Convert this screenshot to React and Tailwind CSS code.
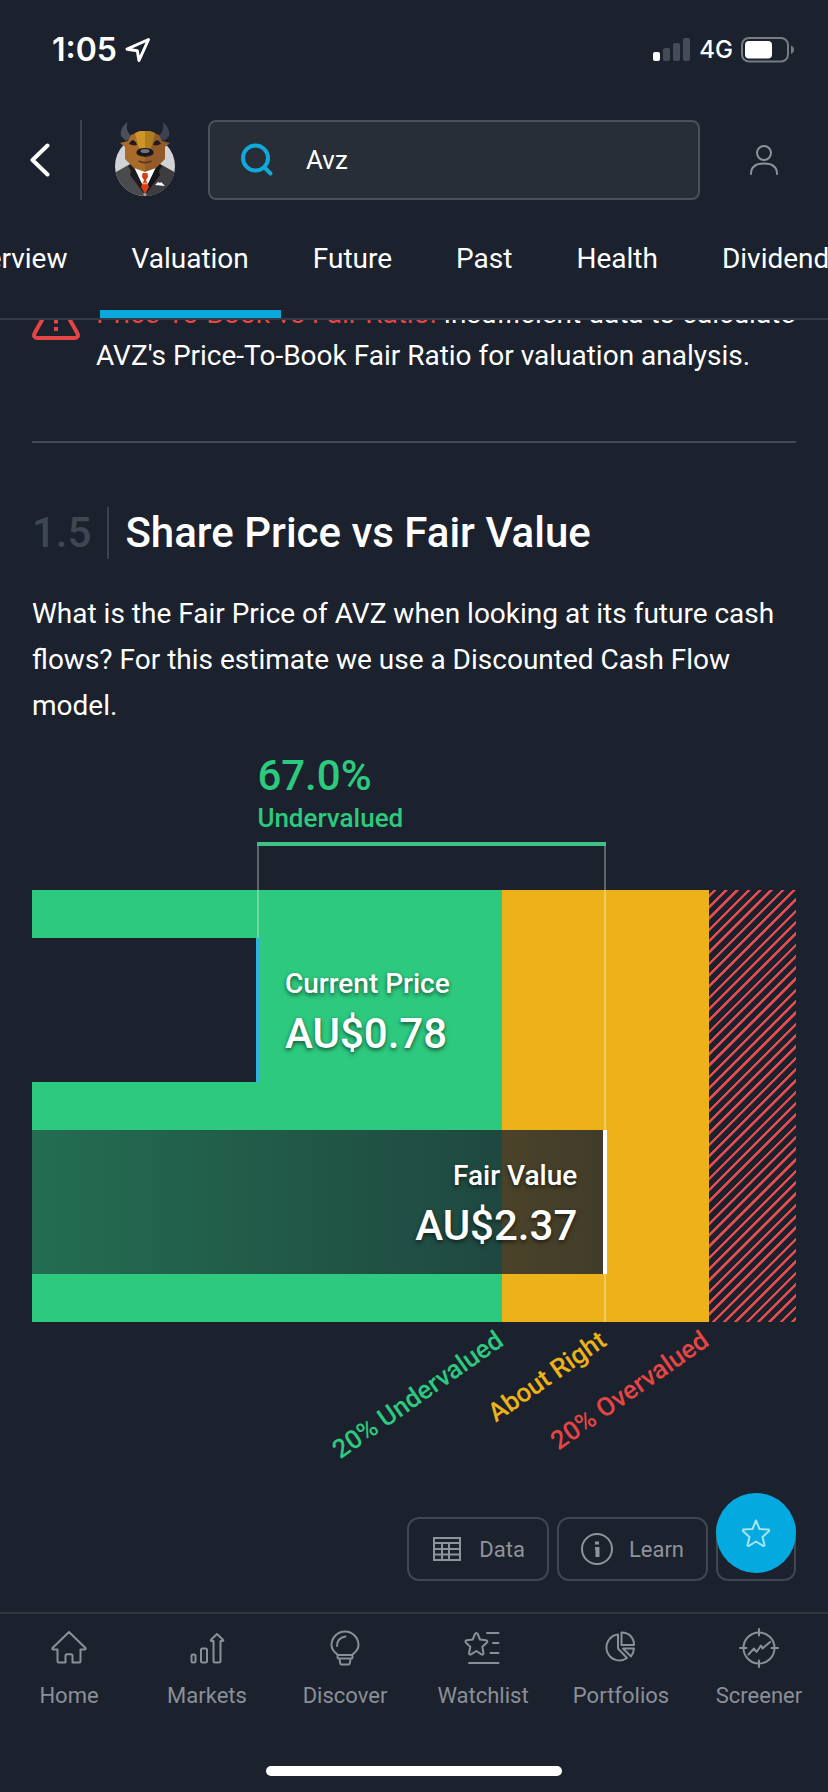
import React, { useState } from 'react';

const TABS = ['Overview', 'Valuation', 'Future', 'Past', 'Health', 'Dividend'];

const LocationIcon = () => (
    <svg width="26" height="26" viewBox="0 0 26 26" fill="none" stroke="white" strokeWidth="3" strokeLinejoin="round" aria-hidden="true">
        <path d="M23.5 2.5 2 12.2l10.3 1.5L14 23.5Z" />
    </svg>
);

const SignalIcon = () => (
    <svg width="38" height="24" viewBox="0 0 38 24" aria-hidden="true">
        <rect x="0" y="14" width="7" height="9" rx="2" fill="white" />
        <rect x="10" y="10" width="7" height="13" rx="2" fill="#464c57" />
        <rect x="20" y="5" width="7" height="18" rx="2" fill="#464c57" />
        <rect x="30" y="0" width="7" height="23" rx="2" fill="#464c57" />
    </svg>
);

const BatteryIcon = () => (
    <svg width="54" height="26" viewBox="0 0 54 26" fill="none" aria-hidden="true">
        <rect x="1" y="1" width="46" height="23.5" rx="7" stroke="#777b83" strokeWidth="2" />
        <rect x="4" y="4" width="27" height="17.5" rx="4" fill="white" />
        <path d="M50 8.5c2 .8 3 2.300 3 4.200s-1 3.400-3 4.200Z" fill="#777b83" />
    </svg>
);

const BackIcon = () => (
    <svg width="20" height="34" viewBox="0 0 20 34" fill="none" stroke="white" strokeWidth="4" strokeLinecap="round" strokeLinejoin="round" aria-hidden="true">
        <path d="M17.500 2.500 2.500 17l15 14.500" />
    </svg>
);

const SearchIcon = () => (
    <svg width="34" height="34" viewBox="0 0 34 34" fill="none" stroke="#10a9da" strokeWidth="4" strokeLinecap="round" aria-hidden="true">
        <circle cx="15.500" cy="15" r="12.500" />
        <path d="m24.500 24.500 6 6" />
    </svg>
);

const UserIcon = () => (
    <svg width="30" height="30" viewBox="0 0 30 30" fill="none" stroke="#8d929c" strokeWidth="2" strokeLinecap="round" aria-hidden="true">
        <circle cx="15" cy="8" r="7" />
        <path d="M2 29c0-6.500 4.500-10.500 13-10.500S28 22.500 28 29" />
    </svg>
);

const BullAvatar = () => (
    <svg width="62" height="78" viewBox="0 0 62 78" role="img" aria-label="Bull in a suit">
        <defs>
            <clipPath id="avatar-circle">
                <circle cx="31" cy="45" r="30" />
            </clipPath>
        </defs>
        <circle cx="31" cy="45" r="30" fill="#d2d3d6" />
        <g clipPath="url(#avatar-circle)">
            <path d="M0 52 18 42l13 34 13-34 18 10v26H0Z" fill="#4b4b4d" />
            <path d="M31 76 44 42l18 10v26H31Z" fill="#3d3d3f" />
            <path d="M18 43 31 47l13-4-6 20-7 9-7-9Z" fill="#fff" />
            <path d="M18 42 14 45l3 5-1 4 15 20V69Z" fill="#1c1d21" />
            <path d="M44 42 48 45l-3 5 1 4-15 20V69Z" fill="#141519" />
            <path d="m28.500 52 5 0 .5 4-2 3 3 7-4 7-4-7 3-7-2-3Z" fill="#d83f14" />
            <path d="m28.500 62.500 5.500 0" stroke="#f3a382" strokeWidth="1.500" />
            <path d="m41 64 3-3 2 1 1-1 4 4Z" fill="#fff" />
            <circle cx="31" cy="73.500" r="1.500" fill="#a4a5a8" />
        </g>
        <path d="M13.500 1C8 5 6 10 7 15l5 5 7-4c-5-3-7.500-8-5.500-15Z" fill="#4b4f5b" />
        <path d="M48.500 1C54 5 56 10 55 15l-5 5-7-4c5-3 7.500-8 5.500-15Z" fill="#3e424e" />
        <path d="M31 10h-5l-9 4-3 6-8 2 5 4v12l9 9 11 4Z" fill="#a96b2c" />
        <path d="M31 10h5l9 4 3 6 8 2-5 4v12l-9 9-11 4Z" fill="#935b29" />
        <path d="M31 10h-5l-5 2 3 12 2 5h5Z" fill="#cd9528" />
        <path d="M31 10h5l5 2-3 12-2 5h-5Z" fill="#b07e1f" />
        <path d="M15 23c2-5 6-5 8 1-3 1-5 0-8-1ZM47 23c-2-5-6-5-8 1 3 1 5 0 8-1Z" fill="#221b1b" />
        <path d="M22.500 31c1-3.500 5-4 8.500-4s7.500.5 8.500 4c.5 3-3 4-8.500 5-5.500-1-9-2-8.500-5Z" fill="#19191d" />
        <ellipse cx="31" cy="30" rx="4.500" ry="2" fill="#70747b" />
        <path d="M24.500 40c4 2 9 2 13 0" fill="none" stroke="#5a3519" strokeWidth="1.500" />
    </svg>
);

const WarningIcon = () => (
    <svg width="48" height="46" viewBox="0 0 48 46" fill="none" stroke="#e64545" strokeWidth="4" strokeLinejoin="round" aria-hidden="true">
        <path d="M21 4.500 3 36.500c-2 4-.5 5.500 3 5.500h36c3.500 0 5-1.500 3-5.500L27 4.500c-1.500-2.500-4.500-2.500-6 0Z" />
        <path d="M24 14v13.500M24 31v4" />
    </svg>
);

const TableIcon = () => (
    <svg width="28" height="24" viewBox="0 0 28 24" fill="none" stroke="#8f939c" strokeWidth="2" aria-hidden="true">
        <path d="M1 1h26v22H1ZM1 6h26M1 12h26M1 17.500h26M9 6v17M16 6v17" />
    </svg>
);

const InfoIcon = () => (
    <svg width="32" height="32" viewBox="0 0 32 32" fill="none" stroke="#8f939c" aria-hidden="true">
        <circle cx="16" cy="16" r="15" strokeWidth="2" />
        <path d="M14 10h4M14 15.500h2.500" strokeWidth="3" />
        <path d="M16.500 14v10" strokeWidth="4" />
    </svg>
);

const StarIcon = () => (
    <svg width="28" height="28" viewBox="0 0 28 28" fill="none" stroke="#a5e4f6" strokeWidth="2" strokeLinejoin="round" aria-hidden="true">
        <path d="M14 1.500 17.500 10l9 .5c1 .2 1 1 .5 1.500l-6.500 6 2 8c0 1-.8 1.200-1.500.8L14 22.500l-7 4.300c-.8.400-1.600 0-1.500-.8l2-8L1 12c-.5-.6-.3-1.300.5-1.500l9-.5Z" />
    </svg>
);

const HomeIcon = () => (
    <path d="M20 4 3.500 20c-.5.800 0 1.500.8 1.500H8.500V33c0 1 .5 1.500 1.500 1.500h6.500V28c0-1.200.5-1.800 1.500-1.800h4c1 0 1.500.6 1.500 1.800v6.500H30c1 0 1.500-.5 1.500-1.500V21.500h4.200c.8 0 1.300-.7.8-1.500Z" />
);

const MarketsIcon = () => (
    <>
        <rect x="4.500" y="26.500" width="4" height="8" rx="1.500" />
        <rect x="14" y="20.500" width="6" height="14" rx="1.500" />
        <path d="M26.500 33V13h-2c-.8 0-1-.7-.5-1.200L30 6l6 5.800c.5.500.3 1.200-.5 1.200h-2v20c0 1-.5 1.500-1.500 1.500h-4c-1 0-1.500-.5-1.500-1.500Z" />
    </>
);

const DiscoverIcon = () => (
    <>
        <path d="M12.500 29v-2.500C9 24 6.500 21.500 6.500 17a13.500 13.500 0 0 1 27 0c0 4.500-2.500 7-6 9.500V29c0 1-.5 1.500-1.500 1.500H14c-1 0-1.500-.5-1.500-1.500ZM12.500 27h15M14.500 30.500l.5 4c.2 1.300.5 2 1.500 2h7c1 0 1.300-.7 1.500-2l.5-4" />
        <path d="M12 18c0-5 2.500-8.500 8.500-9.500" />
    </>
);

const WatchlistIcon = () => (
    <>
        <path d="M12 6c.8-1.500 2-1.500 2.700 0l2.300 5.500 6 .8c1.500.3 1.700 1.500.7 2.500l-4.400 4 1.200 6.200c.2 1.500-.8 2-2 1.300L13.300 23l-5.200 3.300c-1.200.7-2.200 0-2-1.300l1.200-6.200-4.300-4c-1-1-.7-2.200.7-2.500l6-.8Z" />
        <path d="M24 5h11.500M30 15h5.500M27.500 25h8M6 35h29.500" />
    </>
);

const PortfoliosIcon = () => (
    <>
        <path d="M17 6.500A13 13 0 1 0 26 30L17 20.500Z" />
        <path d="M20.500 4.500V17H33C33 9.500 28 4.500 20.500 4.500Z" />
        <path d="M22 20.500h11c-.2 3.500-1.200 5.500-3 8Z" />
    </>
);

const ScreenerIcon = () => (
    <>
        <circle cx="20" cy="20" r="15.500" />
        <path d="M20 1v6.500M20 32.500V39M1 20h6.500M32.500 20H39" />
        <path d="m9.500 26.500 5.500-6 2.500 3.500 4.500-6.500 1.500 3L31 14" />
    </>
);

const NAV_ITEMS = [
    { label: 'Home', Icon: HomeIcon },
    { label: 'Markets', Icon: MarketsIcon },
    { label: 'Discover', Icon: DiscoverIcon },
    { label: 'Watchlist', Icon: WatchlistIcon },
    { label: 'Portfolios', Icon: PortfoliosIcon },
    { label: 'Screener', Icon: ScreenerIcon },
];

const StatusBar = () => (
    <div className="flex h-[100px] items-center justify-between pl-[52px] pr-[33px]">
        <div className="flex items-center gap-2 font-['Inter',sans-serif] text-[32px] font-semibold">
            1:05
            <LocationIcon />
        </div>
        <div className="flex items-center gap-2 font-['Inter',sans-serif] text-2xl font-medium">
            <SignalIcon />
            4G
            <BatteryIcon />
        </div>
    </div>
);

const TopBar = () => {
    const [query, setQuery] = useState('Avz');
    return (
        <div className="mt-5 flex h-20 items-center">
            <button type="button" aria-label="Back" className="flex h-20 w-20 items-center justify-center">
                <BackIcon />
            </button>
            <div className="h-20 border-l-2 border-[#3c424d]" />
            <div className="flex w-[126px] justify-center">
                <BullAvatar />
            </div>
            <label className="flex h-20 flex-1 items-center gap-8 rounded-lg border-2 border-[#4b515c] bg-[#272e38] pl-[30px]">
                <SearchIcon />
                <input
                    type="text"
                    aria-label="Search"
                    value={query}
                    onChange={(e) => setQuery(e.target.value)}
                    className="min-w-0 flex-1 bg-transparent text-[26px] text-white outline-none"
                />
            </label>
            <button type="button" aria-label="Account" className="flex h-20 w-32 items-center justify-center">
                <UserIcon />
            </button>
        </div>
    );
};

const Tabs = () => {
    const [active, setActive] = useState('Valuation');
    return (
        <nav className="flex h-[120px] overflow-hidden border-b-2 border-[#343a45]">
            <div className="-ml-[78px] flex">
                {TABS.map(tab => (
                    <button
                        key={tab}
                        type="button"
                        onClick={() => setActive(tab)}
                        className={tab === active
                            ? 'border-b-8 border-[#0aa8dc] px-8 pt-2 text-[28px]'
                            : 'border-b-8 border-transparent px-8 pt-2 text-[28px]'}
                    >
                        {tab}
                    </button>
                ))}
            </div>
        </nav>
    );
};

const FairValueChart = () => (
    <div>
        <div className="ml-[29.5%] pb-[6px] font-medium text-[#2dc97e]">
            <div className="text-[42px] leading-[48px]">67.0%</div>
            <div className="text-[26px] leading-[36px]">Undervalued</div>
        </div>

        <div className="relative mt-12 flex h-[432px]">
            <div className="w-[61.5%] bg-[#2dc97e]" />
            <div className="w-[27.1%] bg-[#edb21a]" />
            <div className="flex-1 bg-[repeating-linear-gradient(135deg,transparent_0px,transparent_3px,#e64c50_3px,#e64c50_5px,transparent_6px,transparent_8px)]" />

            {/* bracket from current price to fair value */}
            <div className="absolute -top-12 left-[29.5%] h-24 border-l-2 border-white/30" />
            <div className="absolute -top-12 bottom-0 left-[74.9%] border-l-2 border-white/30" />
            <div className="absolute -top-12 left-[29.5%] h-1 w-[45.6%] bg-[#3cc283]" />

            <div className="absolute inset-0 flex flex-col gap-12 py-12 font-medium [text-shadow:0_2px_4px_rgba(0,0,0,0.6)]">
                <div className="flex h-36">
                    <div className="w-[29.7%] border-r-[3px] border-[#2fb4e0] bg-[#1b222d]" />
                    <div className="flex flex-col justify-center pl-[26px]">
                        <div className="text-[28px] leading-[48px]">Current Price</div>
                        <div className="text-[42px] leading-[52px]">AU$0.78</div>
                    </div>
                </div>
                <div className="flex h-36 w-[75.3%] flex-col justify-center border-r-4 border-white bg-linear-to-r from-[#1b222d]/55 to-[#1b222d]/82 pr-[26px] text-right">
                    <div className="text-[28px] leading-[48px]">Fair Value</div>
                    <div className="text-[42px] leading-[52px]">AU$2.37</div>
                </div>
            </div>
        </div>

        <div className="relative h-[195px] text-[26px] leading-8 font-medium">
            <div className="absolute -top-1 right-[37.6%] origin-bottom-right -rotate-35 text-[#2dc97e]">20% Undervalued</div>
            <div className="absolute -top-1 right-[24.1%] origin-bottom-right -rotate-35 text-[#edb21a]">About Right</div>
            <div className="absolute -top-1 right-[10.6%] origin-bottom-right -rotate-35 text-[#e64545]">20% Overvalued</div>
        </div>
    </div>
);

const App = () => {
    return (
        <div className="flex min-h-screen flex-col overflow-x-hidden bg-[#1b222d] font-['Roboto',sans-serif] text-white">
            <header>
                <StatusBar />
                <TopBar />
                <Tabs />
            </header>

            <main className="flex-1 overflow-hidden px-8">
                <div className="-mt-[27px] flex items-start gap-4 text-[28px] leading-[42px]">
                    <div className="shrink-0 pt-[3px]">
                        <WarningIcon />
                    </div>
                    <p>
                        <span className="text-[#e64545]">Price-To-Book vs Fair Ratio:</span> Insufficient data to calculate
                        AVZ's Price-To-Book Fair Ratio for valuation analysis.
                    </p>
                </div>

                <hr className="mt-16 border-t-2 border-[#454b56]" />

                <section className="mt-16">
                    <h2 className="flex h-[52px] items-center text-[42px] leading-[52px] font-medium">
                        <span className="mr-4 border-r-2 border-[#3c424d] pr-4 text-[#414752]">1.5</span>
                        Share Price vs Fair Value
                    </h2>
                    <p className="mt-8 mb-[23px] text-[28px] leading-[46px]">
                        What is the Fair Price of AVZ when looking at its future cash flows? For this estimate we use a Discounted Cash Flow model.
                    </p>
                    <FairValueChart />
                </section>

                <div className="relative flex justify-end gap-2 pb-[31px] text-[22px] text-[#8f939c]">
                    <button type="button" className="flex h-16 items-center gap-4 rounded-xl border-2 border-[#414752] px-[22px]">
                        <span className="flex w-8 justify-center">
                            <TableIcon />
                        </span>
                        Data
                    </button>
                    <button type="button" className="flex h-16 items-center gap-4 rounded-xl border-2 border-[#414752] px-[22px]">
                        <span className="flex w-8 justify-center">
                            <InfoIcon />
                        </span>
                        Learn
                    </button>
                    <button type="button" aria-label="More" className="h-16 w-20 rounded-xl border-2 border-[#414752]" />
                    <button type="button" aria-label="Add to watchlist" className="absolute -top-6 right-0 flex h-20 w-20 items-center justify-center rounded-full bg-[#03a9df]">
                        <StarIcon />
                    </button>
                </div>
            </main>

            <footer className="h-[180px] border-t-2 border-[#30363f]">
                <nav className="grid grid-cols-6 pt-[14px]">
                    {NAV_ITEMS.map(({ label, Icon }) => (
                        <a key={label} href="#" className="flex flex-col items-center gap-3 text-[22px] leading-8 text-[#8b8f98]">
                            <svg width="40" height="40" viewBox="0 0 40 40" fill="none" stroke="currentColor" strokeWidth="2" strokeLinecap="round" strokeLinejoin="round" aria-hidden="true">
                                <Icon />
                            </svg>
                            {label}
                        </a>
                    ))}
                </nav>
                <div className="mx-auto mt-[54px] h-[10px] w-[296px] rounded-full bg-white" />
            </footer>
        </div>
    );
};

export default App;
